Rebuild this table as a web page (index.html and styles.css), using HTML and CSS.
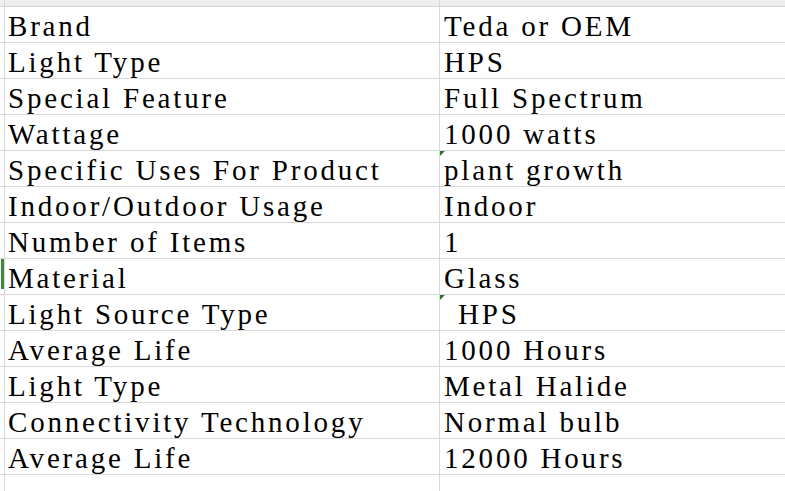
FILE: index.html
```html
<!DOCTYPE html>
<html>
<head>
<meta charset="utf-8">
<link rel="stylesheet" href="styles.css">
</head>
<body>
<div class="sheet">
  <div class="row top"><div class="stub"></div><div class="cell"></div><div class="cell"></div></div>
  <div class="row"><div class="stub"></div><div class="cell">Brand</div><div class="cell">Teda or OEM</div></div>
  <div class="row"><div class="stub"></div><div class="cell">Light Type</div><div class="cell">HPS</div></div>
  <div class="row"><div class="stub"></div><div class="cell">Special Feature</div><div class="cell">Full Spectrum</div></div>
  <div class="row"><div class="stub"></div><div class="cell">Wattage</div><div class="cell">1000 watts</div></div>
  <div class="row"><div class="stub"></div><div class="cell">Specific Uses For Product</div><div class="cell flag">plant growth</div></div>
  <div class="row"><div class="stub"></div><div class="cell">Indoor/Outdoor Usage</div><div class="cell">Indoor</div></div>
  <div class="row"><div class="stub"></div><div class="cell">Number of Items</div><div class="cell">1</div></div>
  <div class="row"><div class="stub active"></div><div class="cell">Material</div><div class="cell">Glass</div></div>
  <div class="row"><div class="stub"></div><div class="cell">Light Source Type</div><div class="cell flag lead"> HPS</div></div>
  <div class="row"><div class="stub"></div><div class="cell">Average Life</div><div class="cell">1000 Hours</div></div>
  <div class="row"><div class="stub"></div><div class="cell">Light Type</div><div class="cell">Metal Halide</div></div>
  <div class="row"><div class="stub"></div><div class="cell">Connectivity Technology</div><div class="cell">Normal bulb</div></div>
  <div class="row"><div class="stub"></div><div class="cell">Average Life</div><div class="cell">12000 Hours</div></div>
  <div class="row tail"><div class="stub"></div><div class="cell"></div><div class="cell"></div></div>
</div>
</body>
</html>
```
FILE: styles.css
```css
html, body {
  margin: 0;
  padding: 0;
  background: #ffffff;
}
.sheet {
  width: 785px;
  height: 491px;
  overflow: hidden;
  font-family: "Liberation Serif", "Times New Roman", serif;
  font-size: 29px;
  letter-spacing: 2.8px;
  color: #000000;
}
.row {
  display: flex;
  height: 36px;
  box-sizing: border-box;
  border-bottom: 1px solid #d9d9d9;
}
.row.top {
  height: 7px;
  background: #eeeeee;
  border-bottom-color: #d4d4d4;
}
.row.tail {
  border-bottom: none;
  height: 20px;
}
.stub {
  width: 5px;
  flex: none;
  box-sizing: border-box;
  border-right: 1px solid #d9d9d9;
}
.stub.active {
  background: linear-gradient(to right, transparent 1px, #3c8a3c 1px, #3c8a3c 4px, transparent 4px) no-repeat 0 0 / 100% 30px;
}
.cell {
  box-sizing: border-box;
  padding: 4px 0 0 3px;
  line-height: 31px;
  white-space: pre;
  overflow: hidden;
  position: relative;
}
.cell:nth-child(2) {
  width: 435px;
  flex: none;
  border-right: 1px solid #d9d9d9;
}
.cell:nth-child(3) {
  flex: 1;
  padding-left: 4px;
}
.cell.lead {
  padding-left: 8px;
}
.flag::before {
  content: "";
  position: absolute;
  left: 0;
  top: 0;
  border-top: 5px solid #1e7a2e;
  border-right: 5px solid transparent;
}
```
